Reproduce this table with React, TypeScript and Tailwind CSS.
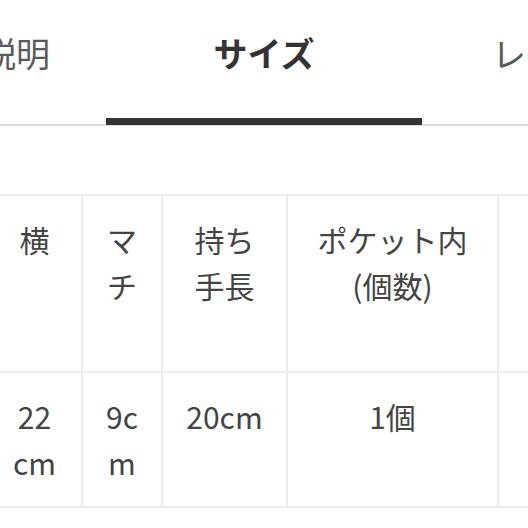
import React from "react";

const font = { fontFamily: '"Noto Sans CJK JP", "Noto Sans", sans-serif' };

export default function App() {
  const cell =
    "border-2 border-[#ececec] align-top text-center px-[10px] pt-[20px] text-[30px] leading-[46px] text-[#444] whitespace-nowrap";
  return (
    <div className="w-[528px] h-[528px] overflow-hidden bg-white" style={font}>
      <div className="flex h-[126px] border-b-2 border-[#dcdcdc]">
        <div className="w-[106px] shrink-0 flex justify-end pr-[56px] pt-[29px] text-[34px] leading-[48px] text-[#5a5a5a] whitespace-nowrap">
          商品説明
        </div>
        <div className="w-[316px] shrink-0 flex flex-col items-center justify-between pt-[29px]">
          <div className="text-[34px] leading-[48px] font-bold text-[#333]">サイズ</div>
          <div className="w-full h-[7px] bg-[#333] mb-[-1px]" />
        </div>
        <div className="flex-1 pl-[70px] pt-[29px] text-[34px] leading-[48px] text-[#5a5a5a] whitespace-nowrap">
          レビュー
        </div>
      </div>
      <div className="mt-[68px] overflow-hidden">
        <table className="ml-[-14px] border-collapse table-fixed w-[665px]">
          <colgroup>
            <col className="w-[95px]" />
            <col className="w-[80px]" />
            <col className="w-[125px]" />
            <col className="w-[211px]" />
            <col className="w-[154px]" />
          </colgroup>
          <tbody>
            <tr className="h-[177px]">
              <td className={cell}>横</td>
              <td className={cell}>
                マ<br />チ
              </td>
              <td className={cell}>
                持ち<br />手長
              </td>
              <td className={cell}>
                ポケット内<br />(個数)
              </td>
              <td className={cell}></td>
            </tr>
            <tr className="h-[135px]">
              <td className={cell}>
                22<br />cm
              </td>
              <td className={cell}>
                9c<br />m
              </td>
              <td className={cell}>20cm</td>
              <td className={cell}>1個</td>
              <td className={cell}></td>
            </tr>
          </tbody>
        </table>
      </div>
    </div>
  );
}
